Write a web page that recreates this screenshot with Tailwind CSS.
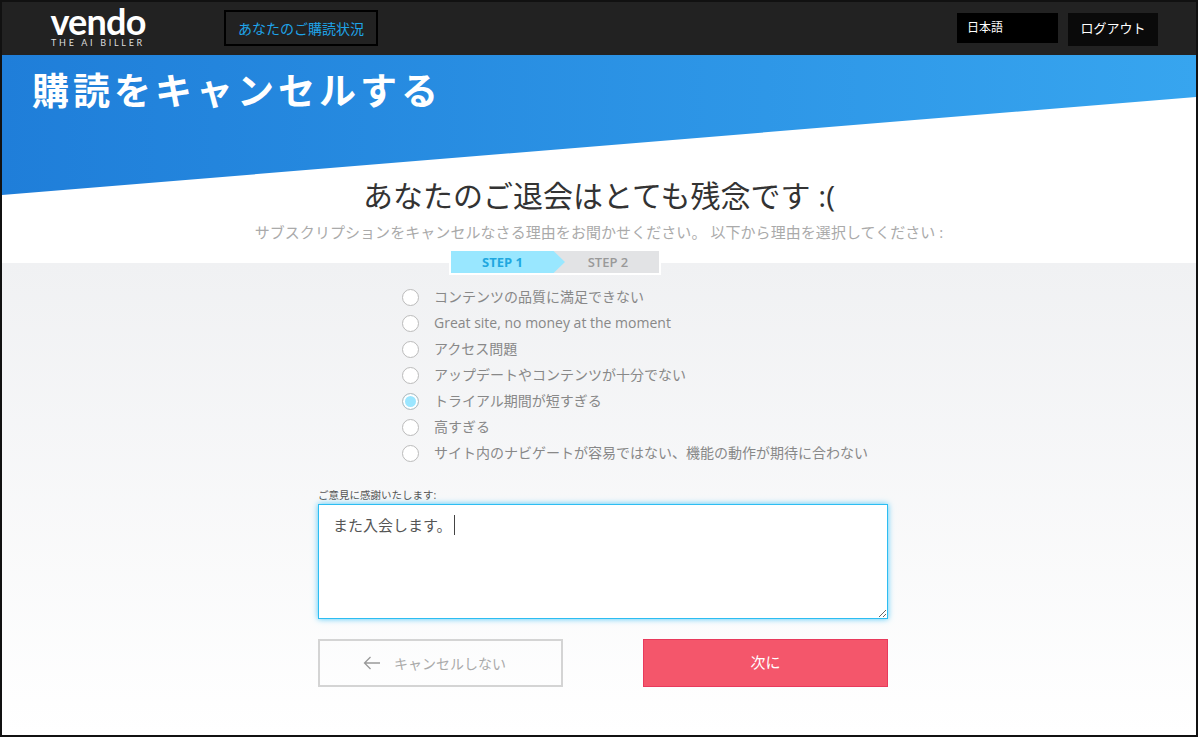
<!DOCTYPE html>
<html lang="ja">
<head>
    <meta charset="UTF-8">
    <meta name="viewport" content="width=device-width, initial-scale=1.0">
    <title>購読をキャンセルする</title>
    <script src="https://cdn.jsdelivr.net/npm/@tailwindcss/browser@4"></script>
</head>
<body class="bg-white font-['Open_Sans','Noto_Sans_CJK_JP',sans-serif]">
<div class="w-[1198px] h-[737px] border-2 border-[#111] flex flex-col overflow-hidden">

    <!-- Header -->
    <header class="h-[53px] shrink-0 bg-[#222] flex items-start">
        <div class="w-[222px] shrink-0 pl-[47px] pt-[4px] flex flex-col items-start">
            <div class="w-[98px] text-center text-white font-['Lato',sans-serif] font-bold text-[36px] leading-[30px] tracking-[-0.8px]">vendo</div>
            <div class="w-[98px] text-center text-[#ddd] font-['Lato',sans-serif] text-[9px] leading-[10px] tracking-[2.7px] mt-[2px]">THE AI BILLER</div>
        </div>
        <a href="#" class="mt-[8px] w-[154px] h-[36px] border-[2px] border-black flex items-center justify-center text-[14px] text-[#1fa5ea]">あなたのご購読状況</a>
        <div class="ml-auto mt-[11px] w-[101px] h-[30px] bg-black text-white text-[12px] pl-[10px] pt-[6px]">日本語</div>
        <a href="#" class="ml-[10px] mr-[38px] mt-[11px] w-[90px] h-[33px] pb-[2px] bg-[#0a0a0a] text-white text-[13px] flex items-center justify-center">ログアウト</a>
    </header>

    <!-- Hero -->
    <section class="relative h-[208px] shrink-0">
        <div class="absolute inset-x-0 top-0 h-[140px] bg-gradient-to-r from-[#1f7ed9] to-[#37a5ef] [clip-path:polygon(0_0,100%_0,100%_42px,0_100%)]"></div>
        <h1 class="relative pl-[30px] pt-[13px] text-white font-bold text-[37px] leading-[46px] tracking-[4px]">購読をキャンセルする</h1>
        <div class="absolute inset-x-0 top-[120px] text-center">
            <h2 class="text-[30px] leading-[42px] text-[#333]">あなたのご退会はとても残念です :(</h2>
            <p class="mt-[3px] text-[15px] leading-[24px] tracking-[0.06px] text-[#aaa]">サブスクリプションをキャンセルなさる理由をお聞かせください。 以下から理由を選択してください :</p>
        </div>
    </section>

    <!-- Form -->
    <section class="relative flex-1 bg-gradient-to-b from-[#f0f1f3] to-white">
        <!-- Steps -->
        <div class="absolute left-[447px] top-[-14px] w-[212px] h-[26px] border-2 border-white bg-[#e2e3e5] flex text-[13px] font-bold leading-[23px]">
            <div class="w-[114px] bg-[#99e7ff] [clip-path:polygon(0_0,90%_0,100%_50%,90%_100%,0_100%)] text-[#1fa8e0] text-center pr-[11px]">STEP 1</div>
            <div class="flex-1 text-[#999] font-semibold text-center pr-[8px]">STEP 2</div>
        </div>

        <form class="w-[570px] ml-[316px]">
            <div class="pl-[84px] pt-[21px] flex flex-col text-[14px] leading-[26px] text-[#888]">
                <label class="h-[26px] flex items-center gap-[15px]"><input type="radio" name="reason" class="appearance-none w-[17px] h-[17px] rounded-full border border-[#bbb] bg-white checked:bg-[#9be6ff] checked:shadow-[inset_0_0_0_2px_white]">コンテンツの品質に満足できない</label>
                <label class="h-[26px] flex items-center gap-[15px]"><input type="radio" name="reason" class="appearance-none w-[17px] h-[17px] rounded-full border border-[#bbb] bg-white checked:bg-[#9be6ff] checked:shadow-[inset_0_0_0_2px_white]">Great site, no money at the moment</label>
                <label class="h-[26px] flex items-center gap-[15px]"><input type="radio" name="reason" class="appearance-none w-[17px] h-[17px] rounded-full border border-[#bbb] bg-white checked:bg-[#9be6ff] checked:shadow-[inset_0_0_0_2px_white]">アクセス問題</label>
                <label class="h-[26px] flex items-center gap-[15px]"><input type="radio" name="reason" class="appearance-none w-[17px] h-[17px] rounded-full border border-[#bbb] bg-white checked:bg-[#9be6ff] checked:shadow-[inset_0_0_0_2px_white]">アップデートやコンテンツが十分でない</label>
                <label class="h-[26px] flex items-center gap-[15px]"><input type="radio" name="reason" checked class="appearance-none w-[17px] h-[17px] rounded-full border border-[#bbb] bg-white checked:bg-[#9be6ff] checked:shadow-[inset_0_0_0_2px_white]">トライアル期間が短すぎる</label>
                <label class="h-[26px] flex items-center gap-[15px]"><input type="radio" name="reason" class="appearance-none w-[17px] h-[17px] rounded-full border border-[#bbb] bg-white checked:bg-[#9be6ff] checked:shadow-[inset_0_0_0_2px_white]">高すぎる</label>
                <label class="h-[26px] flex items-center gap-[15px]"><input type="radio" name="reason" class="appearance-none w-[17px] h-[17px] rounded-full border border-[#bbb] bg-white checked:bg-[#9be6ff] checked:shadow-[inset_0_0_0_2px_white]">サイト内のナビゲートが容易ではない、機能の動作が期待に合わない</label>
            </div>

            <label class="block mt-[22px] text-[10.5px] leading-[14px] text-[#555]">ご意見に感謝いたします:</label>
            <div class="relative mt-[2px]">
                <textarea class="block w-[570px] h-[115px] bg-white border border-[#2dbdf2] shadow-[0_0_6px_#4fc8f8] px-[14px] py-[9px] text-[15px] leading-[22px] text-[#555] outline-none">また入会します。</textarea>
                <span class="absolute left-[136px] top-[11px] w-px h-[20px] bg-[#444]"></span>
            </div>

            <div class="mt-[20px] flex justify-between">
                <a href="#" class="w-[245px] h-[48px] pr-[12px] border-2 border-[#d4d4d4] flex items-center justify-center gap-[13px] text-[14px] text-[#aaa]">
                    <svg width="18" height="14" viewBox="0 0 18 14" fill="none" stroke="#999" stroke-width="1.3"><path d="M17 7H1.5M7.5 1L1.5 7l6 6"/></svg>
                    キャンセルしない
                </a>
                <button type="button" class="w-[245px] h-[48px] pb-[2px] bg-[#f4566b] border border-[#e83a5c] text-white text-[15px]">次に</button>
            </div>
        </form>
    </section>
</div>
</body>
</html>
